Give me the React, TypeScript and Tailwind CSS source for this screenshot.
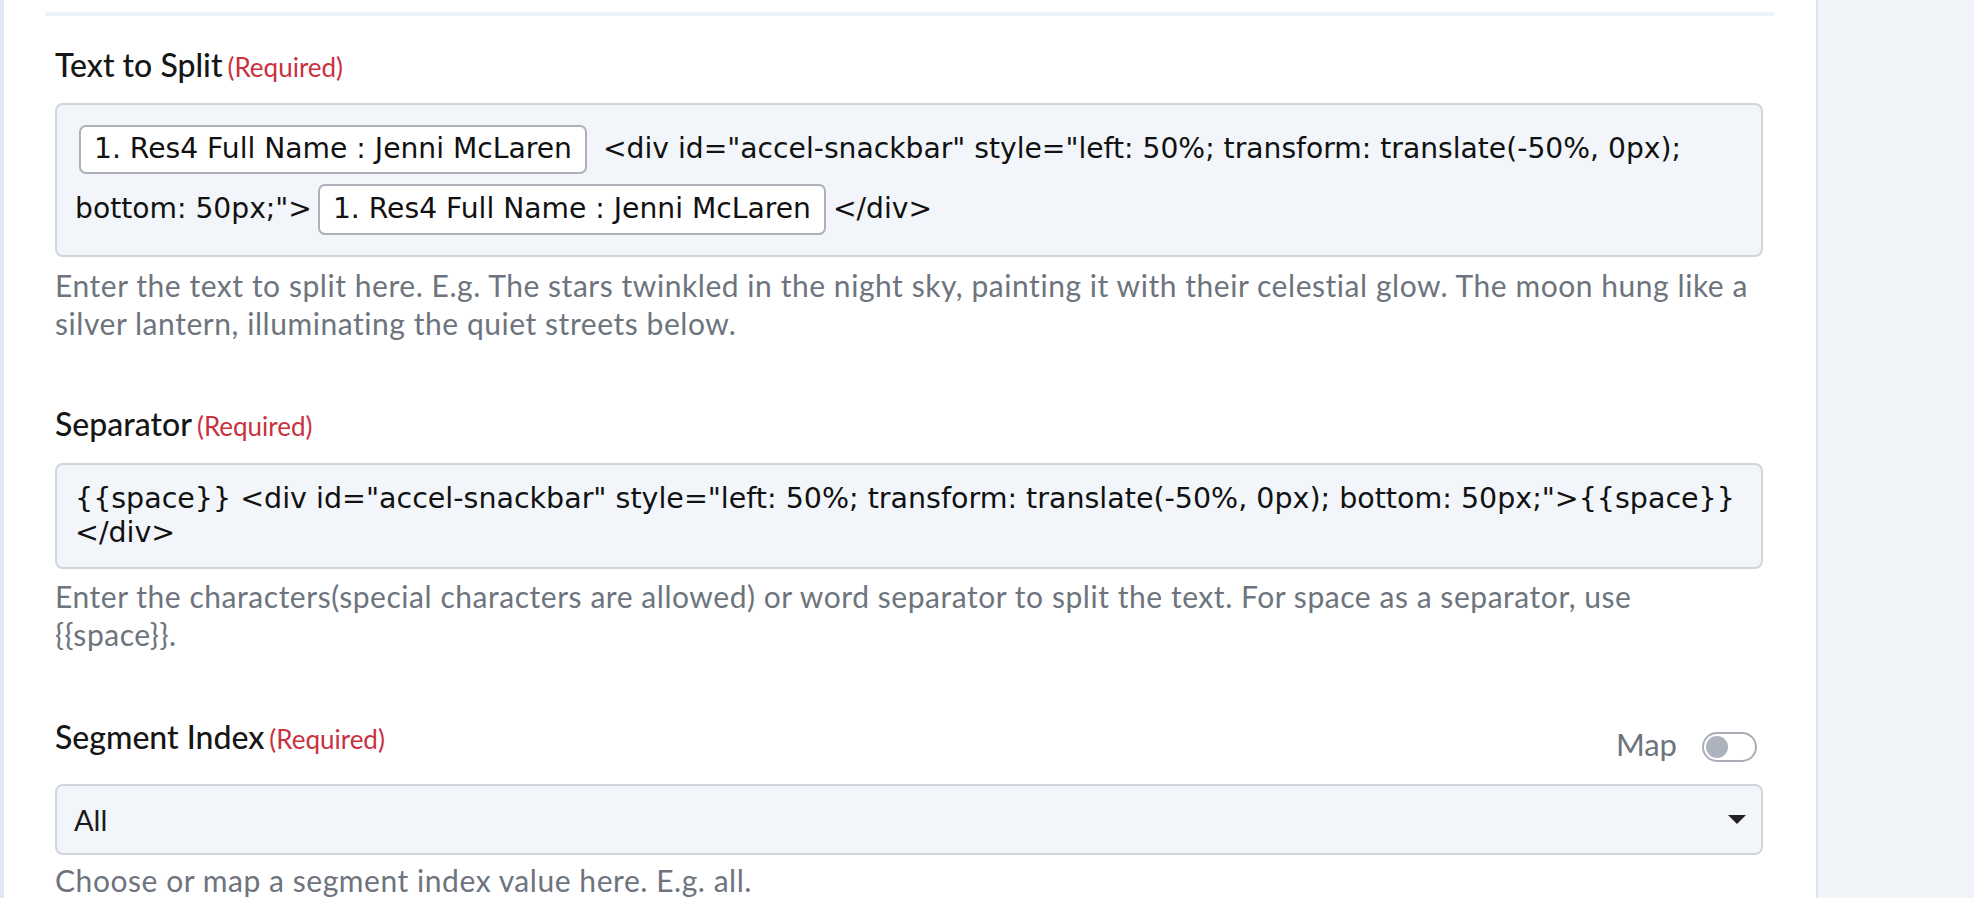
import React from 'react';

const labelFont = { fontFamily: 'Lato, "Open Sans", sans-serif' };
const inputFont = { fontFamily: '"DejaVu Sans", Verdana, sans-serif' };

function FieldLabel({ text }: { text: string }) {
  return (
    <div className="flex items-baseline h-[36px] leading-[36px]" style={labelFont}>
      <span className="text-[32px] font-medium text-[#161616]">{text}</span>
      <span className="ml-[5px] text-[26px] text-[#c8323f]">(Required)</span>
    </div>
  );
}

function Helper({ children, className = '' }: { children: React.ReactNode; className?: string }) {
  return (
    <p className={`text-[30px] leading-[38px] tracking-[0.55px] text-[#6d747d] whitespace-nowrap ${className}`} style={labelFont}>
      {children}
    </p>
  );
}

function Chip({ className = '' }: { className?: string }) {
  return (
    <span className={`inline-flex items-center h-full px-[13px] bg-white border-2 border-[#adb1b7] rounded-[7px] ${className}`}>
      1. Res4 Full Name : Jenni McLaren
    </span>
  );
}

export default function App() {
  return (
    <div className="flex w-full h-[898px] overflow-hidden bg-[#f1f4f8]">
      <div className="w-[4px] shrink-0 bg-[#e2e7f6]" />
      <div className="w-[1814px] shrink-0 bg-white border-r-2 border-[#dfe4f8] px-[41px]">
        <div className="mt-[12px] h-[4px] bg-[#eef3fa]" />

        <div className="ml-[10px] w-[1708px]">
          {/* Text to Split */}
          <div className="mt-[31px]">
            <FieldLabel text="Text to Split" />
          </div>
          <div
            className="mt-[20px] bg-[#f2f5f9] border-2 border-[#d0d5dc] rounded-[8px] px-[18px] py-[20px] text-[28.2px] text-[#111] flex flex-col gap-[10px]"
            style={inputFont}
          >
            <div className="flex items-center h-[49px] whitespace-nowrap">
              <Chip className="ml-[4px]" />
              <span className="ml-[16px]">
                &lt;div id="accel-snackbar" style="left: 50%; transform: translate(-50%, 0px);
              </span>
            </div>
            <div className="flex items-center h-[51px] whitespace-nowrap">
              <span>bottom: 50px;"&gt;</span>
              <Chip className="ml-[6px]" />
              <span className="ml-[7px]">&lt;/div&gt;</span>
            </div>
          </div>
          <Helper className="mt-[9px]">
            Enter the text to split here. E.g. The stars twinkled in the night sky, painting it with their celestial glow. The moon hung like a
            <br />
            silver lantern, illuminating the quiet streets below.
          </Helper>

          {/* Separator */}
          <div className="mt-[64px]">
            <FieldLabel text="Separator" />
          </div>
          <div
            className="mt-[21px] bg-[#f2f5f9] border-2 border-[#d0d5dc] rounded-[8px] px-[18px] py-[17px] text-[28.5px] leading-[34px] text-[#111]"
            style={inputFont}
          >
            <div className="whitespace-nowrap">
              {'{{space}} <div id="accel-snackbar" style="left: 50%; transform: translate(-50%, 0px); bottom: 50px;">{{space}}'}
            </div>
            <div>&lt;/div&gt;</div>
          </div>
          <Helper className="mt-[8px]">
            Enter the characters(special characters are allowed) or word separator to split the text. For space as a separator, use
            <br />
            {'{{space}}'}.
          </Helper>

          {/* Segment Index */}
          <div className="mt-[66px] flex items-start justify-between">
            <FieldLabel text="Segment Index" />
            <div className="flex items-center mt-[13px] mr-[6px]">
              <span className="text-[31px] leading-[30px] -mt-[6px] text-[#6d747d]" style={labelFont}>
                Map
              </span>
              <span className="ml-[25px] w-[55px] h-[30px] rounded-full border-2 border-[#a9aeb6] bg-white flex items-center px-[2px]">
                <span className="w-[22px] h-[22px] rounded-full bg-[#adb3bc]" />
              </span>
            </div>
          </div>
          <div className="mt-[22px] h-[71px] bg-[#f2f5f9] border-2 border-[#d0d5dc] rounded-[8px] flex items-center justify-between pl-[17px] pr-[15px]">
            <span className="text-[29px] text-[#1a1a1a]" style={labelFont}>
              All
            </span>
            <svg width="18" height="9" viewBox="0 0 18 9">
              <path d="M0 0 L18 0 L9 9 Z" fill="#222" />
            </svg>
          </div>
          <Helper className="mt-[6px]">Choose or map a segment index value here. E.g. all.</Helper>
        </div>
      </div>
      <div className="flex-1" />
    </div>
  );
}
